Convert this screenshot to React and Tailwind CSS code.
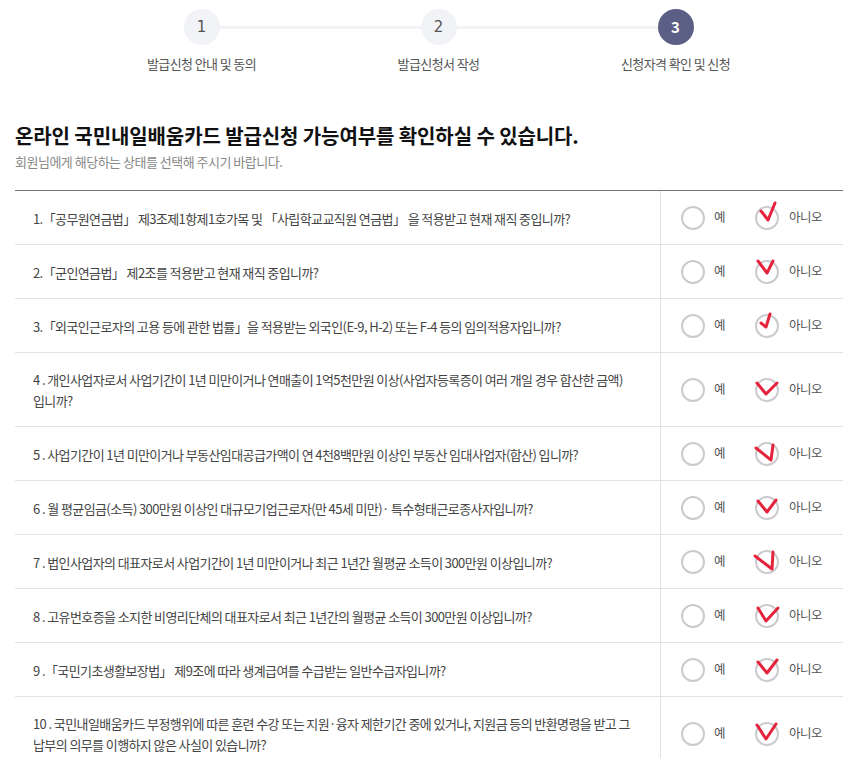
import React from "react";

const font = { fontFamily: '"Noto Sans CJK KR", "Noto Sans", sans-serif' };

const questions = [
  { text: "1.「공무원연금법」 제3조제1항제1호가목 및 「사립학교교직원 연금법」 을 적용받고 현재 재직 중입니까?", check: "-6,-7 1,2 8,-15" },
  { text: "2.「군인연금법」 제2조를 적용받고 현재 재직 중입니까?", check: "-9,-11 0,1 6,-11" },
  { text: "3.「외국인근로자의 고용 등에 관한 법률」을 적용받는 외국인(E-9, H-2) 또는 F-4 등의 임의적용자입니까?", check: "-6,-3 -1,1 3,-12" },
  { text: "4 . 개인사업자로서 사업기간이 1년 미만이거나 연매출이 1억5천만원 이상(사업자등록증이 여러 개일 경우 합산한 금액) 입니까?", check: "-10,-7 -1,4 10,-7" },
  { text: "5 . 사업기간이 1년 미만이거나 부동산임대공급가액이 연 4천8백만원 이상인 부동산 임대사업자(합산) 입니까?", check: "-11,-6 4,6 6,-9" },
  { text: "6 . 월 평균임금(소득) 300만원 이상인 대규모기업근로자(만 45세 미만)· 특수형태근로종사자입니까?", check: "-9,-7 0,4 9,-8" },
  { text: "7 . 법인사업자의 대표자로서 사업기간이 1년 미만이거나 최근 1년간 월평균 소득이 300만원 이상입니까?", check: "-12,-6 5,7 6,-10" },
  { text: "8 . 고유번호증을 소지한 비영리단체의 대표자로서 최근 1년간의 월평균 소득이 300만원 이상입니까?", check: "-9,-8 -1,5 11,-8" },
  { text: "9 .「국민기초생활보장법」 제9조에 따라 생계급여를 수급받는 일반수급자입니까?", check: "-9,-8 0,3 10,-10" },
  { text: "10 . 국민내일배움카드 부정행위에 따른 훈련 수강 또는 지원·융자 제한기간 중에 있거나, 지원금 등의 반환명령을 받고 그 납부의 의무를 이행하지 않은 사실이 있습니까?", check: "-10,-9 -1,5 9,-10" },
];

function toPoints(s) {
  return s
    .split(" ")
    .map((p) => {
      const [x, y] = p.split(",").map(Number);
      return `${x + 20},${y + 20}`;
    })
    .join(" ");
}

function Radio({ checked, check }) {
  return (
    <span className="relative inline-block w-6 h-6 shrink-0">
      <span className="block w-6 h-6 rounded-full border-[2.5px] border-[#cbcbcf] bg-white" />
      {checked && (
        <svg
          className="absolute left-[-8px] top-[-8px] overflow-visible"
          width="40"
          height="40"
          viewBox="0 0 40 40"
        >
          <polyline
            points={toPoints(check)}
            fill="none"
            stroke="#e5233c"
            strokeWidth="3"
            strokeLinecap="round"
            strokeLinejoin="round"
          />
        </svg>
      )}
    </span>
  );
}

const steps = ["발급신청 안내 및 동의", "발급신청서 작성", "신청자격 확인 및 신청"];

export default function App() {
  return (
    <div className="w-[843px] bg-white overflow-hidden" style={font}>
      {/* steps */}
      <div className="relative pt-[9px] pl-[83px] flex">
        <div className="absolute left-[201px] top-[26px] w-[473px] h-[3px] bg-[#f2f3f7]" />
        {steps.map((s, i) => (
          <div key={s} className="relative w-[237px] flex flex-col items-center">
            <div
              className={
                i === 2
                  ? "w-9 h-9 rounded-full bg-[#5c5f85] text-white font-bold text-[15px] flex items-center justify-center"
                  : "w-9 h-9 rounded-full bg-[#f2f3f7] text-[#555] text-[15px] flex items-center justify-center"
              }
              style={{ fontFamily: i === 2 ? font.fontFamily : '"DejaVu Sans", sans-serif' }}
            >
              {i + 1}
            </div>
            <div className="mt-[9px] text-[13px] leading-5 text-[#555] tracking-[-0.6px]">{s}</div>
          </div>
        ))}
      </div>

      <div className="pl-[15px]">
        <h1 className="mt-[48px] text-[20px] leading-7 font-bold text-[#111] tracking-[-0.1px]">
          온라인 국민내일배움카드 발급신청 가능여부를 확인하실 수 있습니다.
        </h1>
        <p className="mt-[3px] text-[13px] leading-[18px] text-[#888] tracking-[-0.5px]">
          회원님에게 해당하는 상태를 선택해 주시기 바랍니다.
        </p>

        <div className="mt-[19px] border-t border-[#777]">
          {questions.map((q, i) => (
            <div key={i} className="flex min-h-[54px] border-b border-[#e2e2e2]">
              <div className="w-[646px] shrink-0 border-r border-[#e2e2e2] pl-[18px] pr-[12px] pt-4 pb-[15px] flex items-center text-[13px] leading-[21px] text-[#444] tracking-[-0.6px] break-keep">
                <span>{q.text}</span>
              </div>
              <div className="flex items-center pl-[20px] text-[12.5px] text-[#555] tracking-[-0.5px]">
                <Radio />
                <span className="ml-[9px] w-[41px]">예</span>
                <Radio checked check={q.check} />
                <span className="ml-[10px]">아니오</span>
              </div>
            </div>
          ))}
        </div>
      </div>
    </div>
  );
}
